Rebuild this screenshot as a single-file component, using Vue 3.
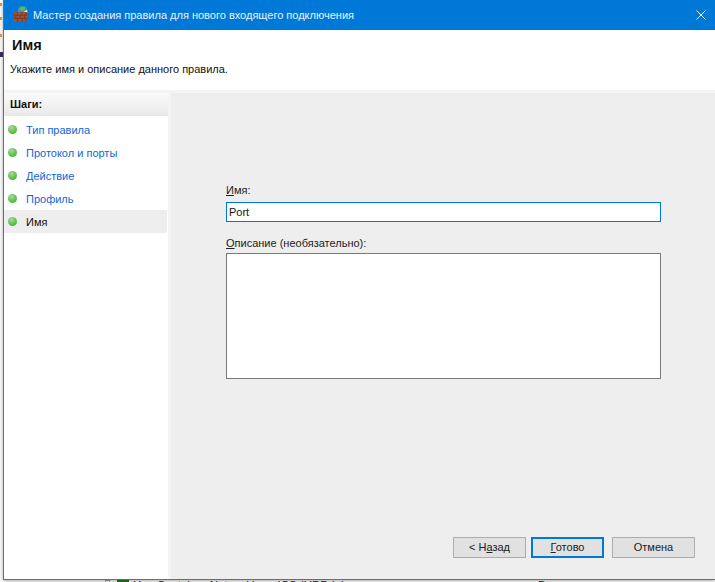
<script setup>
const steps = ['Тип правила', 'Протокол и порты', 'Действие', 'Профиль', 'Имя']
</script>

<template>
  <div class="screen">
    <div class="backdrop-left">
      <span class="bit bit-a"></span>
      <span class="bit bit-b"></span>
      <span class="bit bit-c"></span>
      <span class="bit bit-d"></span>
    </div>
    <div class="under">
      <span class="under-check"></span>
      <span class="under-icon"></span>
      <span class="under-text">Hns Container Networking - ICS (UDP-In)</span>
      <span class="under-val">Все</span>
    </div>
    <div class="window">
      <div class="titlebar">
        <svg class="app-icon" width="16" height="16" viewBox="0 0 16 16">
          <circle cx="9.5" cy="5" r="5" fill="#2f8fd8" />
          <path d="M6 2.2q3-3 6.5-1l-1.2 2.8-3 1.2z" fill="#63b84a" />
          <path d="M10.5 6l3.5-2.6.5 3z" fill="#e9e4c0" />
          <rect x="1" y="6" width="13" height="9.5" fill="#a0523c" />
          <path d="M1 9.2h13M1 12.4h13M4.5 6v3.2M9 6v3.2M13 6v3.2M2.8 9.2v3.2M7 9.2v3.2M11.5 9.2v3.2M4.5 12.4v3.1M9 12.4v3.1M13 12.4v3.1" stroke="#6e3526" stroke-width=".8" fill="none" />
        </svg>
        <span class="title">Мастер создания правила для нового входящего подключения</span>
        <svg class="close" width="10" height="10" viewBox="0 0 10 10">
          <path d="M.5.5l9 9M9.5.5l-9 9" stroke="#fff" stroke-width="1" fill="none" />
        </svg>
      </div>
      <div class="header">
        <div class="heading">Имя</div>
        <div class="subheading">Укажите имя и описание данного правила.</div>
      </div>
      <div class="body">
        <aside class="sidebar">
          <div class="steps-title">Шаги:</div>
          <ul class="steps">
            <li v-for="(s, i) in steps" :key="s" class="step" :class="{ current: i === steps.length - 1 }">
              <span class="dot"></span>
              <span class="step-label">{{ s }}</span>
            </li>
          </ul>
        </aside>
        <main class="content">
          <div class="form">
            <label class="label"><u>И</u>мя:</label>
            <div class="input">Port</div>
            <label class="label label-desc"><u>О</u>писание (необязательно):</label>
            <div class="textarea"></div>
          </div>
          <div class="buttons">
            <button class="btn">&lt; Н<u>а</u>зад</button>
            <button class="btn primary"><u>Г</u>отово</button>
            <button class="btn cancel">Отмена</button>
          </div>
        </main>
      </div>
    </div>
  </div>
</template>

<style scoped>
.screen {
  position: relative;
  width: 715px;
  height: 582px;
  overflow: hidden;
  background: #fff;
  font-family: "Liberation Sans", Arial, sans-serif;
  font-size: 11px;
  color: #111;
}
.backdrop-left {
  position: absolute;
  left: 0;
  top: 0;
  width: 3px;
  height: 70px;
}
.bit {
  position: absolute;
  left: 0;
  width: 2px;
  height: 3px;
  background: #d9913a;
  z-index: 2;
}
.bit-a { top: 3px; }
.bit-b { top: 17px; }
.bit-c { top: 34px; }
.bit-d {
  top: 52px;
  width: 3px;
  height: 5px;
  background: #3a2a5a;
}
.window {
  position: absolute;
  left: 3px;
  top: 0;
  width: 712px;
  height: 580px;
  box-sizing: border-box;
  border-left: 1px solid #2a7fc4;
  border-bottom: 1px solid #2a7fc4;
  display: flex;
  flex-direction: column;
  background: #f4f4f4;
  box-shadow: 0 1px 4px rgba(0, 0, 0, 0.35);
}
.titlebar {
  height: 30px;
  flex: none;
  background: #0078d7;
  display: flex;
  align-items: center;
  padding-left: 9px;
  padding-right: 9px;
}
.app-icon {
  flex: none;
  margin-top: -2px;
}
.title {
  margin-left: 4px;
  font-size: 11px;
  flex: 1;
  color: #eaf4fc;
}
.close {
  flex: none;
}
.header {
  height: 60px;
  flex: none;
  background: #fff;
  box-sizing: border-box;
  padding-top: 7px;
  padding-left: 8px;
}
.heading {
  font-size: 14.5px;
  font-weight: bold;
  line-height: 16px;
}
.subheading {
  margin-top: 8px;
  margin-left: -2px;
  line-height: 16px;
}
.body {
  flex: 1;
  display: flex;
  min-height: 0;
  margin-top: 3px;
}
.sidebar {
  width: 164px;
  flex: none;
  background: #fff;
  display: flex;
  flex-direction: column;
}
.steps-title {
  height: 23px;
  flex: none;
  box-sizing: border-box;
  padding-left: 6px;
  line-height: 23px;
  font-weight: bold;
  background: linear-gradient(#fbfbfb, #e9e9e9);
}
.steps {
  list-style: none;
  margin: 0;
  padding: 2px 0 0;
}
.step {
  height: 23px;
  display: flex;
  align-items: center;
  padding-left: 4px;
  color: #0f66d6;
}
.step.current {
  background: #eeeeee;
  color: #111;
  margin-right: 1px;
}
.dot {
  width: 9px;
  height: 9px;
  border-radius: 50%;
  flex: none;
  background: radial-gradient(circle at 40% 30%, #b9cdb0, #62c84a 50%, #3f9f35);
}
.step-label {
  margin-left: 9px;
}
.content {
  flex: 1;
  margin-left: 3px;
  background: #eeeeee;
  display: flex;
  flex-direction: column;
  min-width: 0;
}
.form {
  flex: 1;
  padding-top: 90px;
  padding-left: 55px;
}
.label {
  display: block;
  line-height: 15px;
  color: #222;
}
.input {
  width: 435px;
  height: 20px;
  box-sizing: border-box;
  margin-top: 4px;
  border: 1px solid #0078d7;
  background: #fff;
  padding-left: 2px;
  line-height: 18px;
}
.label-desc {
  margin-top: 14px;
}
.textarea {
  width: 435px;
  height: 126px;
  box-sizing: border-box;
  margin-top: 2px;
  border: 1px solid #7a7a7a;
  background: #fff;
}
.buttons {
  flex: none;
  display: flex;
  justify-content: flex-end;
  align-items: flex-start;
  gap: 5px;
  padding-right: 20px;
  padding-bottom: 21px;
}
.btn {
  width: 73px;
  height: 21px;
  box-sizing: border-box;
  background: #e1e1e1;
  border: 1px solid #adadad;
  font-family: inherit;
  font-size: 11px;
  color: #222;
  padding: 0;
  line-height: 1;
}
.btn.primary {
  border: 2px solid #0078d7;
}
.btn.cancel {
  width: 83px;
  margin-left: 3px;
}
.under {
  position: absolute;
  left: 105px;
  top: 577px;
  width: 500px;
  height: 16px;
  display: flex;
  align-items: center;
  font-size: 11.5px;
  color: #222;
  white-space: nowrap;
}
.under-check {
  width: 5px;
  height: 10px;
  border: 1px solid #aaa;
  box-sizing: border-box;
}
.under-icon {
  width: 12px;
  height: 12px;
  margin-left: 7px;
  background: #1f7a1f;
}
.under-text {
  margin-left: 4px;
}
.under-val {
  position: absolute;
  left: 433px;
}
</style>
